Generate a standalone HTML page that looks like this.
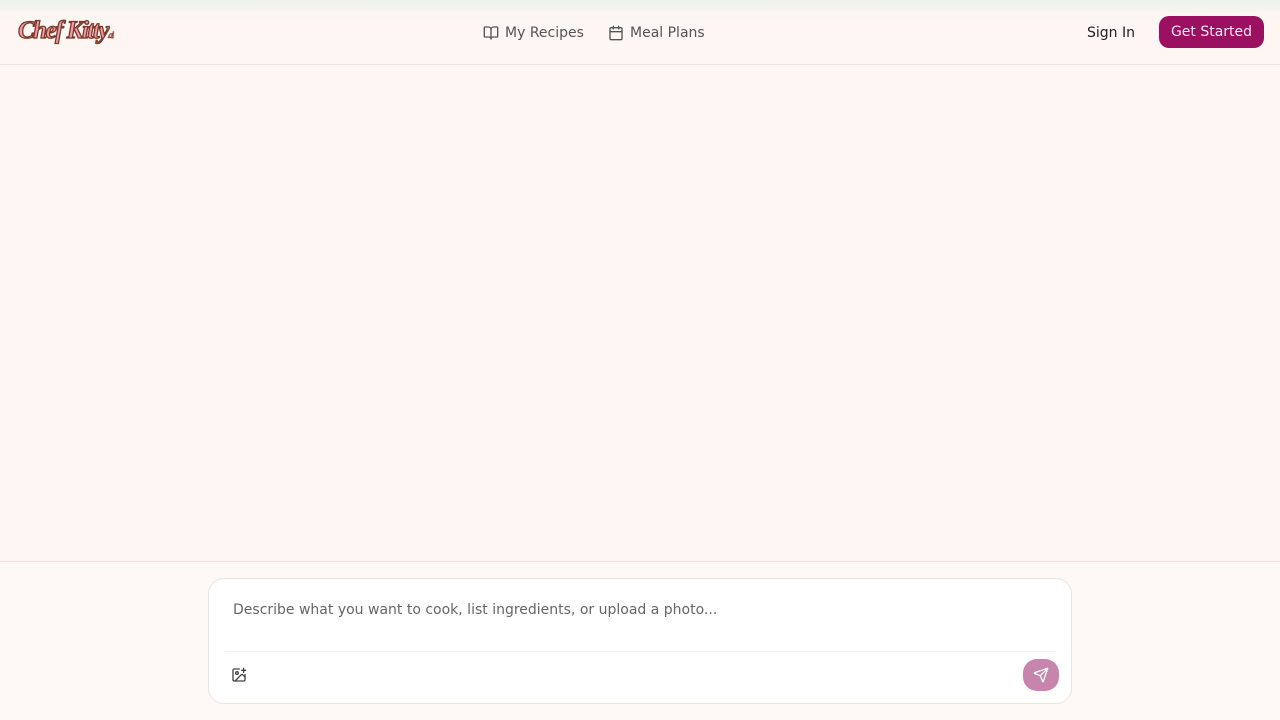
<!DOCTYPE html>
<html><head><meta charset="utf-8"><style>
*{box-sizing:border-box;margin:0;padding:0}
body{width:1280px;height:720px;overflow:hidden;background:#fdf6f2;font-family:"DejaVu Sans","Liberation Sans",sans-serif;position:relative}
.hdr{position:absolute;left:0;top:0;width:1280px;height:65px;background:linear-gradient(#eef0ea 0,#fbf6f2 14px,#fdf6f2 24px);border-bottom:1px solid #ece4e0}
.logo{position:absolute;left:18px;top:17px;font-family:"Liberation Serif",serif;font-style:italic;font-weight:bold;font-size:25px;color:#f29aa8;-webkit-text-stroke:1.3px #7a3a2a;letter-spacing:-1.5px}
.logo small{font-size:9px;-webkit-text-stroke:0.5px #7a3a2a}
.nav{position:absolute;top:25px;font-size:14px;color:#555;display:flex;align-items:center;gap:6px}
.signin{position:absolute;left:1087px;top:25px;font-size:14px;color:#222}
.gs{position:absolute;left:1159px;top:16px;width:105px;height:32px;border-radius:10px;background:#9b1060;color:#fde6f0;font-size:14px;text-align:center;line-height:33px}
.foot{position:absolute;left:0;top:561px;width:1280px;height:159px;border-top:1px solid #f0e0dc;background:#fdf8f3}
.box{position:absolute;left:208px;top:578px;width:864px;height:126px;background:#fff;border:1px solid #ece4e0;border-radius:16px}
.ph{position:absolute;left:24px;top:23px;font-size:14px;color:#666}
.sep{position:absolute;left:16px;right:16px;top:72px;border-top:1px solid #f2eeec}
.send{position:absolute;left:814px;top:80px;width:36px;height:32px;border-radius:14px;background:#c785ad}
</style></head><body>
<div class="hdr">
<div class="logo">Chef Kitty<small>.ai</small></div>
<div class="nav" style="left:483px">
<svg width="16" height="16" viewBox="0 0 24 24" fill="none" stroke="#555" stroke-width="2" stroke-linecap="round" stroke-linejoin="round"><path d="M12 7v14"/><path d="M3 18a1 1 0 0 1-1-1V4a1 1 0 0 1 1-1h5a4 4 0 0 1 4 4 4 4 0 0 1 4-4h5a1 1 0 0 1 1 1v13a1 1 0 0 1-1 1h-6a3 3 0 0 0-3 3 3 3 0 0 0-3-3z"/></svg>My Recipes</div>
<div class="nav" style="left:608px">
<svg width="16" height="16" viewBox="0 0 24 24" fill="none" stroke="#555" stroke-width="2" stroke-linecap="round" stroke-linejoin="round"><path d="M8 2v4M16 2v4"/><rect x="3" y="4" width="18" height="18" rx="2"/><path d="M3 10h18"/></svg>Meal Plans</div>
<div class="signin">Sign In</div>
<div class="gs">Get Started</div>
</div>
<div class="foot"></div>
<div class="box">
<div class="ph">Describe what you want to cook, list ingredients, or upload a photo...</div>
<div class="sep"></div>
<svg style="position:absolute;left:22px;top:88px" width="16" height="16" viewBox="0 0 24 24" fill="none" stroke="#444" stroke-width="2" stroke-linecap="round" stroke-linejoin="round"><path d="M16 5h6M19 2v6"/><path d="M21 11.5V19a2 2 0 0 1-2 2H5a2 2 0 0 1-2-2V5a2 2 0 0 1 2-2h7.5"/><path d="m21 15-3.1-3.1a2 2 0 0 0-2.8 0L6 21"/><circle cx="9" cy="9" r="2"/></svg>
<div class="send"><svg style="position:absolute;left:10px;top:8px" width="16" height="16" viewBox="0 0 24 24" fill="none" stroke="#fff" stroke-width="2" stroke-linecap="round" stroke-linejoin="round"><path d="M14.5 21.7a.5.5 0 0 0 .9 0l6.5-19a.5.5 0 0 0-.6-.6l-19 6.5a.5.5 0 0 0 0 .9l7.9 3.2a2 2 0 0 1 1.1 1.1z"/><path d="m21.9 2.1-10.9 10.9"/></svg></div>
</div>
</body></html>
